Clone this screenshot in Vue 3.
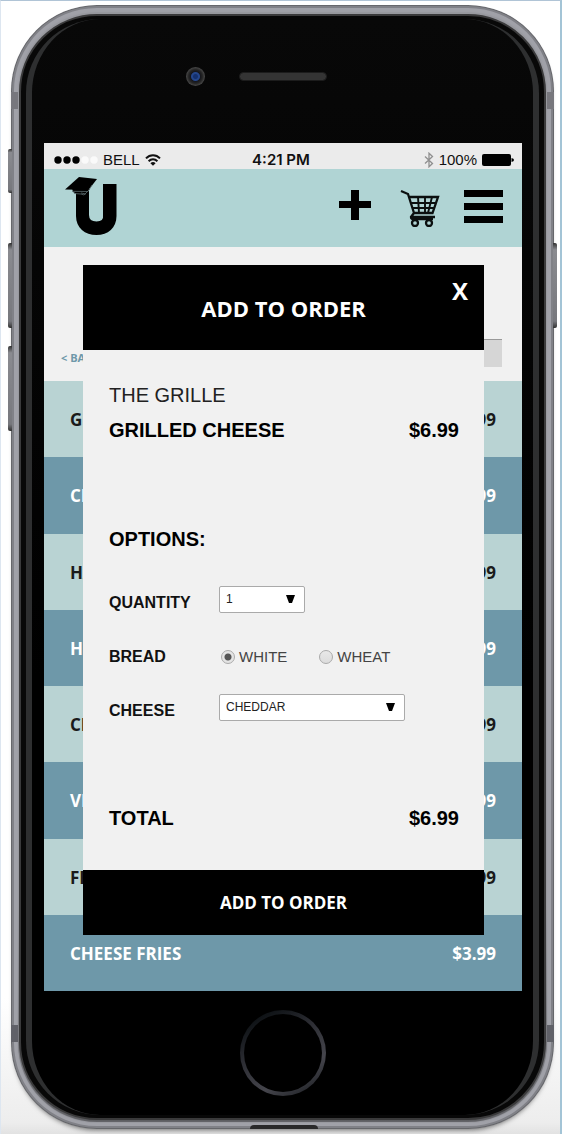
<script setup>
import { ref, computed } from 'vue'

const menu = [
  { name: 'GRILLED CHEESE', price: '$6.99' },
  { name: 'CHICKEN BURGER', price: '$7.99' },
  { name: 'HAMBURGER', price: '$6.99' },
  { name: 'HOT DOG', price: '$4.99' },
  { name: 'CHEESEBURGER', price: '$7.99' },
  { name: 'VEGGIE BURGER', price: '$6.99' },
  { name: 'FRIES', price: '$2.99' },
  { name: 'CHEESE FRIES', price: '$3.99' },
]

const quantity = ref(1)
const bread = ref('WHITE')
const cheese = ref('CHEDDAR')
const breads = ['WHITE', 'WHEAT']
const cheeses = ['CHEDDAR', 'SWISS', 'MOZZARELLA']
const total = computed(() => '$' + (6.99 * quantity.value).toFixed(2))
</script>

<template>
  <div class="page">
    <div class="phone">
      <span class="key mute"></span>
      <span class="key vol-up"></span>
      <span class="key vol-down"></span>
      <span class="key power"></span>
      <span class="antenna upper"></span>
      <span class="antenna lower"></span>
      <span class="slot"></span>

      <div class="glass">
        <div class="face">
          <div class="forehead">
            <span class="camera"></span>
            <span class="speaker"></span>
          </div>

          <main class="screen">
            <div class="status">
              <div class="carrier">
                <svg width="44" height="10" viewBox="0 0 44 10">
                  <g fill="#000"><circle cx="4" cy="5" r="3.700" /><circle cx="13" cy="5" r="3.700" /><circle cx="22" cy="5" r="3.700" /></g>
                  <g fill="#fafafa"><circle cx="31" cy="5" r="3.700" /><circle cx="40" cy="5" r="3.700" /></g>
                </svg>
                <span>BELL</span>
                <svg width="16" height="12" viewBox="0 0 16 12" fill="none" stroke="#111" stroke-width="2">
                  <path d="M1 4.4C5 .2 11 .2 15 4.4" />
                  <path d="M3.6 7.2C6.2 4.600 9.800 4.600 12.400 7.200" />
                  <path d="M8 11.800L5.400 9.200Q8 7 10.600 9.200Z" fill="#111" stroke="none" />
                </svg>
              </div>
              <div class="time">4:21 PM</div>
              <div class="power-info">
                <svg width="10" height="16" viewBox="0 0 10 16" fill="none" stroke="#909090" stroke-width="1.300">
                  <path d="M1 4.500L8.500 11.500L5 14.800V1.200L8.500 4.500L1 11.500" />
                </svg>
                <span>100%</span>
                <svg width="32" height="12" viewBox="0 0 32 12"><rect width="29" height="12" rx="2" /><path d="M29.500 4Q32 4.500 32 6T29.500 8Z" /></svg>
              </div>
            </div>

            <header class="bar">
              <a class="logo" href="#" aria-label="Home">
                <svg width="54" height="62" viewBox="0 0 54 62">
                  <path d="M12 14H25V41Q25 47.500 32.500 47.500T39 41V10H52.500V42C52.500 54 44 61 32.500 61S12 54 12 42Z" />
                  <path d="M8 14L25 13L23 21L19 21L13 20L9 18Z" />
                  <path d="M1 15.500L15 3L33 5L24.500 16Z" />
                  <path d="M8 17.300L24 17.500L28 11M10 19.500L17 20L20 21L26 15M17 19L22 20" fill="none" stroke="#5a6b6d" stroke-width=".8" />
                </svg>
              </a>
              <nav class="tools">
                <button type="button" aria-label="Add">
                  <svg width="34" height="32" viewBox="0 0 34 32"><path d="M13 1H21V12H33V19H21V31H13V19H1V12H13Z" /></svg>
                </button>
                <button type="button" aria-label="Cart">
                  <svg width="40" height="38" viewBox="0 0 40 38" fill="none" stroke="#0b0f0f" stroke-width="2.300">
                    <path d="M1 2L8 5L14 24M9 8H38L32.500 24H14L11 28Q11 30 13 30H33M12 28H35" />
                    <path d="M10 14H36M12 19H34M18 8L19 24M25 8V24M32 8L28 24" stroke-width="1.900" />
                    <circle cx="15" cy="34" r="3" /><circle cx="29" cy="34" r="3" />
                  </svg>
                </button>
                <button type="button" aria-label="Menu">
                  <svg width="39" height="34" viewBox="0 0 39 34"><path d="M0 1H39V8H0ZM0 14H39V21H0ZM0 27H39V34H0Z" /></svg>
                </button>
              </nav>
            </header>

            <div class="search">
              <a class="back" href="#">&lt; BACK</a>
              <span class="filter"></span>
            </div>

            <ul class="menu">
              <li v-for="item in menu" :key="item.name">
                <span>{{ item.name }}</span><span>{{ item.price }}</span>
              </li>
            </ul>

            <form class="modal" role="dialog" aria-labelledby="modal-title" @submit.prevent>
              <div class="modal-head">
                <h1 id="modal-title">ADD TO ORDER</h1>
                <button class="close" type="button">X</button>
              </div>
              <div class="modal-body">
                <div class="place">THE GRILLE</div>
                <div class="line"><span>GRILLED CHEESE</span><span>$6.99</span></div>
                <h2>OPTIONS:</h2>
                <div class="field">
                  <label class="name" for="quantity">QUANTITY</label>
                  <div class="pick small">
                    <select id="quantity" v-model="quantity">
                      <option v-for="n in 5" :key="n" :value="n">{{ n }}</option>
                    </select>
                    <svg width="10" height="10" viewBox="0 0 10 10"><path d="M0 1H9L6 9H3Z" /></svg>
                  </div>
                </div>
                <div class="field" role="radiogroup" aria-labelledby="bread-name">
                  <span id="bread-name" class="name">BREAD</span>
                  <div class="radios">
                    <label v-for="b in breads" :key="b">
                      <input v-model="bread" type="radio" name="bread" :value="b" />{{ b }}
                    </label>
                  </div>
                </div>
                <div class="field">
                  <label class="name" for="cheese">CHEESE</label>
                  <div class="pick large">
                    <select id="cheese" v-model="cheese">
                      <option v-for="c in cheeses" :key="c">{{ c }}</option>
                    </select>
                    <svg width="10" height="10" viewBox="0 0 10 10"><path d="M0 1H9L6 9H3Z" /></svg>
                  </div>
                </div>
                <div class="line total"><span>TOTAL</span><span>{{ total }}</span></div>
              </div>
              <button class="submit" type="submit">ADD TO ORDER</button>
            </form>
          </main>

          <div class="chin"><button class="home" type="button" aria-label="Home button"></button></div>
        </div>
      </div>
    </div>
  </div>
</template>

<style>
body {
  background: #fff;
}
</style>

<style scoped>
* {
  box-sizing: border-box;
}
.page {
  min-height: 100vh;
  display: flex;
  padding: 4px 6px 5px 10px;
  border-top: 1px solid #b0c4d6;
  border-left: 1px solid #dde6f0;
  border-right: 2px solid #a3c4d6;
  background: linear-gradient(#fff 88%, #ededed 99%, #e2e2e2);
  font-family: "Liberation Sans", Arial, sans-serif;
  color: #000;
}
button {
  padding: 0;
  border: 0;
  background: none;
  font: inherit;
  color: inherit;
  cursor: pointer;
}
svg {
  display: block;
  flex: none;
}
.phone {
  position: relative;
  flex: 1;
  display: flex;
  padding: 9px 8px;
  border-radius: 86px;
  background: linear-gradient(#0000 80%, #0006), #97989e;
  box-shadow: inset 0 0 0 1px #66676b, inset 0 0 0 3px #808187, inset 0 0 1px 7px #a0a1a8, 0 4px 5px -3px #0008;
}
.glass {
  flex: 1;
  display: flex;
  padding: 3px 5px;
  border-radius: 78px;
  background: #080808;
  border: 2px solid #3a3a3b;
}
.face {
  flex: 1;
  display: flex;
  flex-direction: column;
  padding: 0 11px 0 12px;
  border: solid #2e2f30;
  border-width: 0 6px;
  border-radius: 74px;
  background: linear-gradient(#080808, #000 60%);
}
.key {
  position: absolute;
  left: -3px;
  width: 4px;
  height: 85px;
  border-radius: 2px 0 0 2px;
  background: linear-gradient(#333, #8a8b90 8%, #77787d 92%, #333);
}
.mute {
  top: 144px;
  height: 44px;
}
.vol-up {
  top: 238px;
}
.vol-down {
  top: 341px;
}
.power {
  top: 238px;
  left: auto;
  right: -3px;
  border-radius: 0 2px 2px 0;
}
.antenna {
  position: absolute;
  left: 0;
  right: 0;
  height: 17px;
  border: solid #77777d;
  border-width: 0 7px;
}
.upper {
  top: 87px;
}
.lower {
  bottom: 87px;
  border-color: #606168;
}
.slot {
  position: absolute;
  bottom: 0;
  left: 44%;
  width: 68px;
  height: 4px;
  border-radius: 4px 4px 0 0;
  background: #29292a;
}
.forehead {
  height: 124px;
  display: grid;
  grid-template-columns: 1fr 88px 1fr;
  align-items: center;
  padding-bottom: 9px;
}
.camera {
  justify-self: end;
  width: 19px;
  height: 19px;
  margin-right: 34px;
  border-radius: 50%;
  background: radial-gradient(circle at 50% 50%, #14306e 0 2px, #24468c 3px 4px, #16171c 5px, #262626 7px, #424242 9px);
}
.speaker {
  height: 9px;
  border-radius: 5px;
  background: #343434;
  border: 1px solid #1c1c1c;
}
.screen {
  position: relative;
  flex: 1;
  display: flex;
  flex-direction: column;
  background: #f1f1f1;
}
.status {
  height: 26px;
  display: grid;
  grid-template-columns: 1fr auto 1fr;
  align-items: center;
  padding: 7px 8px 0 10px;
  background: #ebebeb;
  font-size: 15px;
  line-height: 19px;
  color: #111;
}
.carrier,
.power-info {
  display: flex;
  align-items: center;
  gap: 5px;
}
.power-info {
  justify-content: flex-end;
}
.time {
  padding-right: 6px;
  font: 600 15px/19px Inter, sans-serif;
}
.bar {
  height: 78px;
  display: flex;
  justify-content: space-between;
  align-items: flex-start;
  padding: 5px 19px 0 20px;
  background: #b0d4d4;
}
.tools {
  display: flex;
  align-items: flex-start;
  padding-top: 15px;
}
.tools button:nth-child(2) {
  margin: 0 24px 0 28px;
}
.search {
  height: 134px;
  display: flex;
  justify-content: space-between;
  align-items: flex-end;
  padding: 0 20px 14px 17px;
}
.back {
  font: 700 11px/18px "Open Sans", sans-serif;
  color: #6e98a9;
  text-decoration: none;
}
.filter {
  width: 180px;
  height: 28px;
  border-top: 1px solid #999;
  background: #d6d6d6;
}
.menu {
  flex: 1;
  display: flex;
  flex-direction: column;
  margin: 0;
  padding: 0;
  list-style: none;
  font: 700 17px/24px "Open Sans", sans-serif;
}
.menu li {
  flex: 1;
  display: flex;
  justify-content: space-between;
  align-items: center;
  padding: 2px 26px 0;
  background: #b9d3d3;
  color: #1a1a1a;
}
.menu li:nth-child(even) {
  background: #6e98a9;
  color: #fff;
}
.modal {
  position: absolute;
  inset: 122px 38px 56px 39px;
  display: flex;
  flex-direction: column;
  background: #f1f1f1;
}
.modal-head {
  position: relative;
  height: 85px;
  display: grid;
  place-items: center;
  background: #000;
  color: #fff;
  font-family: "Open Sans", sans-serif;
}
.modal-head h1 {
  margin: 0;
  font-size: 22px;
  line-height: 28px;
}
.close {
  position: absolute;
  top: 12px;
  right: 16px;
  font-size: 24px;
  font-weight: 700;
  line-height: 28px;
}
.modal-body {
  flex: 1;
  display: flex;
  flex-direction: column;
  padding: 28px 25px 34px 26px;
  font-size: 20px;
  line-height: 35px;
}
.place {
  color: #222;
}
.line {
  display: flex;
  justify-content: space-between;
  font-weight: 700;
}
h2 {
  margin: 74px 0 19px;
  font-size: 20px;
  line-height: 35px;
}
.field {
  height: 54px;
  display: grid;
  grid-template-columns: 110px 1fr;
  align-items: center;
  font-size: 16px;
  line-height: 20px;
}
.name {
  font-weight: 700;
  color: #111;
}
.pick {
  display: grid;
  align-items: center;
  margin-bottom: 8px;
}
.small {
  width: 86px;
}
.large {
  width: 186px;
}
.pick select,
.pick svg {
  grid-area: 1 / 1;
}
.pick svg {
  justify-self: end;
  margin-right: 9px;
  pointer-events: none;
}
select {
  appearance: none;
  width: 100%;
  height: 27px;
  padding: 0 6px;
  border: 1px solid #aaa;
  border-radius: 2px;
  background: #fff;
  font: 12px/20px "Liberation Sans", Arial, sans-serif;
  color: #222;
}
.radios {
  display: flex;
  gap: 32px;
  padding-left: 2px;
  font-size: 15px;
  color: #444;
}
.radios label {
  display: flex;
  align-items: center;
  gap: 4px;
}
input {
  appearance: none;
  width: 14px;
  height: 14px;
  margin: 0;
  border: 1px solid #aaa;
  border-radius: 50%;
  background: linear-gradient(#e8e8e8, #dcdcdc);
}
input:checked {
  background: radial-gradient(circle, #555 0 3px, #e4e4e4 4px);
}
.total {
  margin-top: auto;
}
.submit {
  height: 65px;
  background: #000;
  color: #fff;
  font: 700 17px/24px "Open Sans", sans-serif;
}
.chin {
  height: 124px;
  display: grid;
  place-items: center;
}
.home {
  width: 86px;
  height: 86px;
  border-radius: 50%;
  background: linear-gradient(#000, #000) padding-box, linear-gradient(150deg, #0b0f12 10%, #2c2d33 40%, #45454c 70%, #15181c) border-box;
  border: 4px solid transparent;
}
</style>
